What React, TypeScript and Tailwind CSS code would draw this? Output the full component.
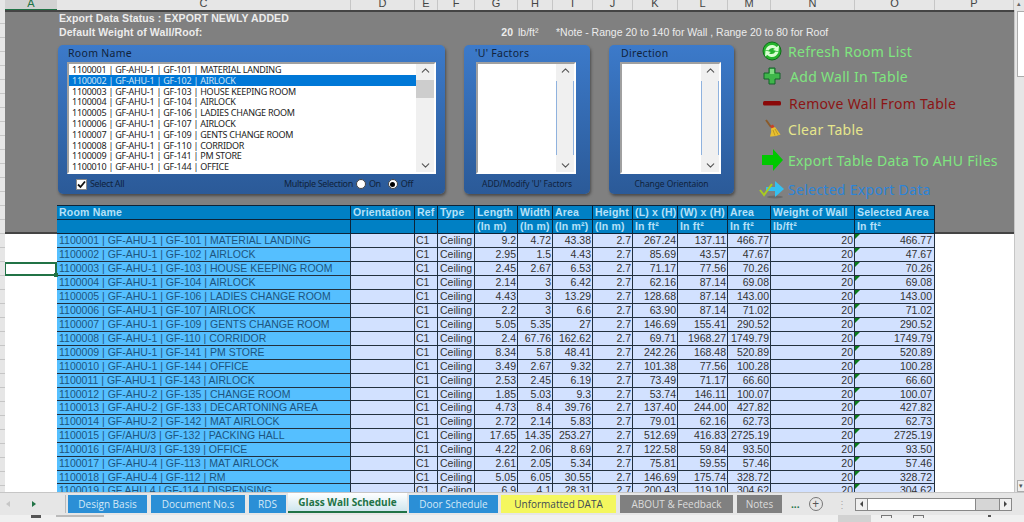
import { ChevronDown, ChevronUp } from 'lucide-react';

const columnGrid =
  'grid grid-cols-[294px_64px_23px_37px_43px_35px_40px_40px_45px_50px_43px_84px_80px]';

const sheetColumns = [
  { name: 'C', width: 'w-[294px]' },
  { name: 'D', width: 'w-[64px]' },
  { name: 'E', width: 'w-[23px]' },
  { name: 'F', width: 'w-[37px]' },
  { name: 'G', width: 'w-[43px]' },
  { name: 'H', width: 'w-[35px]' },
  { name: 'I', width: 'w-[40px]' },
  { name: 'J', width: 'w-[40px]' },
  { name: 'K', width: 'w-[45px]' },
  { name: 'L', width: 'w-[50px]' },
  { name: 'M', width: 'w-[43px]' },
  { name: 'N', width: 'w-[84px]' },
  { name: 'O', width: 'w-[80px]' },
  { name: 'P', width: 'w-[79px]' },
];

const headers = [
  ['Room Name', ''],
  ['Orientation', ''],
  ['Ref', ''],
  ['Type', ''],
  ['Length', '(In m)'],
  ['Width', '(In m)'],
  ['Area', '(In m²)'],
  ['Height', '(In m)'],
  ['(L) x (H)', 'In ft²'],
  ['(W) x (H)', 'In ft²'],
  ['Area', 'In ft²'],
  ['Weight of Wall', 'lb/ft²'],
  ['Selected Area', 'In ft²'],
];

const rows = [
  ['1100001 | GF-AHU-1 | GF-101 | MATERIAL LANDING', '9.2', '4.72', '43.38', '267.24', '137.11', '466.77'],
  ['1100002 | GF-AHU-1 | GF-102 | AIRLOCK', '2.95', '1.5', '4.43', '85.69', '43.57', '47.67'],
  ['1100003 | GF-AHU-1 | GF-103 | HOUSE KEEPING ROOM', '2.45', '2.67', '6.53', '71.17', '77.56', '70.26'],
  ['1100004 | GF-AHU-1 | GF-104 | AIRLOCK', '2.14', '3', '6.42', '62.16', '87.14', '69.08'],
  ['1100005 | GF-AHU-1 | GF-106 | LADIES CHANGE ROOM', '4.43', '3', '13.29', '128.68', '87.14', '143.00'],
  ['1100006 | GF-AHU-1 | GF-107 | AIRLOCK', '2.2', '3', '6.6', '63.90', '87.14', '71.02'],
  ['1100007 | GF-AHU-1 | GF-109 | GENTS CHANGE ROOM', '5.05', '5.35', '27', '146.69', '155.41', '290.52'],
  ['1100008 | GF-AHU-1 | GF-110 | CORRIDOR', '2.4', '67.76', '162.62', '69.71', '1968.27', '1749.79'],
  ['1100009 | GF-AHU-1 | GF-141 | PM STORE', '8.34', '5.8', '48.41', '242.26', '168.48', '520.89'],
  ['1100010 | GF-AHU-1 | GF-144 | OFFICE', '3.49', '2.67', '9.32', '101.38', '77.56', '100.28'],
  ['1100011 | GF-AHU-1 | GF-143 | AIRLOCK', '2.53', '2.45', '6.19', '73.49', '71.17', '66.60'],
  ['1100012 | GF-AHU-2 | GF-135 | CHANGE ROOM', '1.85', '5.03', '9.3', '53.74', '146.11', '100.07'],
  ['1100013 | GF-AHU-2 | GF-133 | DECARTONING AREA', '4.73', '8.4', '39.76', '137.40', '244.00', '427.82'],
  ['1100014 | GF-AHU-2 | GF-142 | MAT AIRLOCK', '2.72', '2.14', '5.83', '79.01', '62.16', '62.73'],
  ['1100015 | GF/AHU/3 | GF-132 | PACKING HALL', '17.65', '14.35', '253.27', '512.69', '416.83', '2725.19'],
  ['1100016 | GF/AHU/3 | GF-139 | OFFICE', '4.22', '2.06', '8.69', '122.58', '59.84', '93.50'],
  ['1100017 | GF-AHU-4 | GF-113 | MAT AIRLOCK', '2.61', '2.05', '5.34', '75.81', '59.55', '57.46'],
  ['1100018 | GF-AHU-4 | GF-112 | RM', '5.05', '6.05', '30.55', '146.69', '175.74', '328.72'],
  ['1100019 | GF AHU 4 | GF-114 | DISPENSING', '6.9', '4.1', '28.31', '200.43', '119.10', '304.62'],
];

const roomList = rows.slice(0, 10).map((r) => r[0]);

const tabs = [
  { label: 'Design Basis', cls: 'w-[79px] mr-[4px] bg-[#2b8fd6] text-[#d5e9f7]' },
  { label: 'Document No.s', cls: 'w-[94px] mr-[4px] bg-[#2b8fd6] text-[#d5e9f7]' },
  { label: 'RDS', cls: 'w-[37px] mr-[2px] bg-[#2b8fd6] text-[#d5e9f7]' },
  {
    label: 'Glass Wall Schedule',
    cls: 'w-[119px] mr-[2px] -mt-[2px] bg-gradient-to-b from-white to-[#cfe6ee] text-[#217346] font-bold border-b-2 border-[#217346]',
  },
  { label: 'Door Schedule', cls: 'w-[89px] mr-[3px] bg-[#2b8fd6] text-[#d5e9f7]' },
  { label: 'Unformatted DATA', cls: 'w-[115px] mr-[4px] bg-[#f4f75e] text-[#3d4a55]' },
  { label: 'ABOUT & Feedback', cls: 'w-[113px] mr-[4px] bg-[#808080] text-[#dcdcdc]' },
  { label: 'Notes', cls: 'w-[45px] bg-[#808080] text-[#dcdcdc]' },
];

function RefreshIcon() {
  return (
    <svg width="20" height="20" viewBox="0 0 20 20">
      <circle cx="10" cy="10" r="9" fill="#25b52c" stroke="#0f6e1a" />
      <path d="M3.5 9 Q5.5 3.5 11 4 Q13.5 4.3 14.5 6 L17 4.5 L16.5 10.5 L11 9 L13 7.8 Q9 5.5 6.5 9.5 z" fill="#d9ffd2" />
      <path d="M16.5 11 Q14.5 16.5 9 16 Q6.5 15.7 5.5 14 L3 15.5 L3.5 9.5 L9 11 L7 12.2 Q11 14.5 13.5 10.5 z" fill="#d9ffd2" />
    </svg>
  );
}

function AddIcon() {
  return (
    <svg width="20" height="20" viewBox="0 0 20 20">
      <path d="M7 2 h6 v5 h5 v6 h-5 v5 h-6 v-5 h-5 v-6 h5 z" fill="#3fb64a" stroke="#14632a" />
      <path d="M8 3 h4 v5 h-4 z" fill="#7ddc80" />
    </svg>
  );
}

function RemoveIcon() {
  return (
    <svg width="20" height="20" viewBox="0 0 20 20">
      <rect x="1" y="8" width="18" height="4.5" rx="1.5" fill="#8a0808" />
    </svg>
  );
}

function BroomIcon() {
  return (
    <svg width="20" height="20" viewBox="0 0 20 20">
      <path d="M2 1 L7 8" stroke="#8a5a2a" strokeWidth="2" />
      <path d="M6 7 L9 5.5 L11 9 L8 10 z" fill="#c8402a" />
      <path d="M7 9.5 L11 8 L16.5 15.5 Q11 18 6 17.5 Q8 13 7 9.5 z" fill="#e8c030" />
      <path d="M9 11 L11 16.5 M11 10 L14 15.5" stroke="#b08a18" strokeWidth="0.7" />
    </svg>
  );
}

function ArrowIcon() {
  return (
    <svg width="22" height="22" viewBox="0 0 22 22">
      <path d="M0 6 h11 v-6 l10 11 l-10 11 v-6 h-11 z" fill="#00c800" />
    </svg>
  );
}

function SelectedIcon() {
  return (
    <svg width="26" height="20" viewBox="0 0 26 20">
      <ellipse cx="16" cy="18" rx="8" ry="1.5" fill="#6a6a6a" />
      <path d="M7 8 h9 v-6 l9 8 l-9 8 v-6 h-9 z" fill="#35c0f0" />
      <path d="M1 11 L5 16 L13 5" stroke="#a8cc20" strokeWidth="2" fill="none" />
    </svg>
  );
}

const actions = [
  { label: 'Refresh Room List', color: 'text-[#7fe67f]', icon: <RefreshIcon />, iconBox: 'w-[27px] pl-[1px]', gap: '' },
  { label: 'Add Wall In Table', color: 'text-[#7fe67f]', icon: <AddIcon />, iconBox: 'w-[29px] pl-[1px]', gap: 'mt-[5px]' },
  { label: 'Remove Wall From Table', color: 'text-[#8c1414]', icon: <RemoveIcon />, iconBox: 'w-[28px] pl-[1px]', gap: 'mt-[7px]' },
  { label: 'Clear Table', color: 'text-[#e6e68c]', icon: <BroomIcon />, iconBox: 'w-[27px] pl-[3px]', gap: 'mt-[6px]' },
  { label: 'Export Table Data To AHU Files', color: 'text-[#7fe67f]', icon: <ArrowIcon />, iconBox: 'w-[27px] pl-[1px]', gap: 'mt-[11px]' },
  { label: 'Selected Export Data', color: 'text-[#2c84d8]', icon: <SelectedIcon />, iconBox: 'w-[29px] -ml-[2px]', gap: 'mt-[9px]' },
];

function ListScrollbar({ thumb }: { thumb: 'room' | 'tall' }) {
  return (
    <div className="flex w-[18px] flex-col items-center justify-between bg-[#f0f0f0] text-[#555]">
      <ChevronUp size={13} strokeWidth={2} />
      {thumb === 'room' ? (
        <div className="mb-[58px] h-[18px] w-full bg-[#cdcdcd]" />
      ) : (
        <div className="h-[74px] w-full border-x border-[#8fb2de] bg-[#f0f0f0]" />
      )}
      <ChevronDown size={13} strokeWidth={2} />
    </div>
  );
}

function GroupBox({
  title,
  width,
  titlePad,
  children,
}: {
  title: string;
  width: string;
  titlePad: string;
  children: React.ReactNode;
}) {
  return (
    <div
      className={`${width} flex h-[149px] flex-col rounded-[5px] bg-gradient-to-b from-[#3c7aca] to-[#2b5a98] shadow-[1px_2px_3px_rgba(40,40,40,0.6)]`}
    >
      <div className={`${titlePad} pt-[1px] h-[17px] text-[10.5px] leading-[14px] tracking-[0.3px] text-[#10233c] font-['Noto_Sans',sans-serif]`}>
        {title}
      </div>
      {children}
    </div>
  );
}

function RoomNameBox() {
  return (
    <GroupBox title="Room Name" width="w-[387px]" titlePad="pl-[10px]">
      <div className="mx-[9px] flex h-[112px] border-2 border-[#a0a0a0] border-r-white border-b-white bg-white">
        <div className="flex-1 overflow-hidden font-['Noto_Sans',sans-serif] text-[9px] tracking-[-0.25px] text-[#222]">
          {roomList.map((item, i) => (
            <div
              key={item}
              className={`h-[10.8px] pl-[3px] leading-[11px] whitespace-nowrap ${i === 1 ? 'bg-[#0078d7] text-[#cfe3f5]' : ''}`}
            >
              {item}
            </div>
          ))}
        </div>
        <ListScrollbar thumb="room" />
      </div>
      <div className="flex flex-1 items-center pr-[32px] pl-[18px] font-['Noto_Sans',sans-serif] text-[9px] tracking-[-0.35px] text-[#10233c]">
        <div className="flex items-center gap-[3px]">
          <div className="flex h-[11px] w-[11px] items-center justify-center border border-[#888] bg-white">
            <svg width="9" height="9" viewBox="0 0 9 9">
              <path d="M1 4.5 L3.5 7 L8 1.5" stroke="#111" strokeWidth="1.8" fill="none" />
            </svg>
          </div>
          <span>Select All</span>
        </div>
        <div className="ml-auto flex items-center">
          <span>Multiple Selection</span>
          <span className="ml-[3px] h-[10px] w-[10px] rounded-full border border-[#444] bg-white" />
          <span className="ml-[3px]">On</span>
          <span className="ml-[7px] flex h-[10px] w-[10px] items-center justify-center rounded-full border border-[#444] bg-white">
            <span className="h-[5px] w-[5px] rounded-full bg-black" />
          </span>
          <span className="ml-[3px]">Off</span>
        </div>
      </div>
    </GroupBox>
  );
}

function SmallBox({ title, footer, width, titlePad, listMargin }: { title: string; footer: string; width: string; titlePad: string; listMargin: string }) {
  return (
    <GroupBox title={title} width={width} titlePad={titlePad}>
      <div className={`${listMargin} flex h-[112px] border-2 border-[#a0a0a0] border-r-white border-b-white bg-white`}>
        <div className="flex-1" />
        <ListScrollbar thumb="tall" />
      </div>
      <div className="flex flex-1 items-center justify-center font-['Noto_Sans',sans-serif] text-[8.5px] tracking-[-0.1px] text-[#10233c]">
        {footer}
      </div>
    </GroupBox>
  );
}

function HeaderRow({ line }: { line: 0 | 1 }) {
  return (
    <div className={`${columnGrid} h-[14px] border-b border-[#0c2338]`}>
      {headers.map((h, i) => (
        <div
          key={i}
          className="overflow-hidden border-r border-[#0c2338] pl-[2px] text-[10.5px] leading-[13px] font-bold tracking-[0.2px] whitespace-nowrap text-[#b5e0f8]"
        >
          {h[line]}
        </div>
      ))}
    </div>
  );
}

function DataRow({ row, height }: { row: string[]; height: string }) {
  const [room, length, width, area, lh, wh, total] = row;
  const numbers = [length, width, area, '2.7', lh, wh, total, '20'];
  return (
    <div className={`${columnGrid} ${height} grid-rows-[minmax(0,1fr)] border-b border-[#22303e] text-[10.5px] leading-[13px] text-[#333]`}>
      <div className="overflow-hidden border-r border-[#22303e] bg-[#55bfff] pl-[2px] whitespace-nowrap text-[#1d5580]">
        {room}
      </div>
      <div className="border-r border-[#22303e] bg-[#d2e1ff]" />
      <div className="overflow-hidden border-r border-[#22303e] bg-[#d2e1ff] pl-[1px]">C1</div>
      <div className="overflow-hidden border-r border-[#22303e] bg-[#d2e1ff] pl-[2px]">Ceiling</div>
      {numbers.map((n, i) => (
        <div key={i} className="overflow-hidden border-r border-[#22303e] bg-[#d2e1ff] pr-[1px] text-right">
          {n}
        </div>
      ))}
      <div className="relative overflow-hidden border-r border-[#22303e] bg-[#d2e1ff] pr-[2px] text-right">
        <span className="absolute top-0 left-0 border-t-[5px] border-r-[5px] border-t-[#0a7a1a] border-r-transparent" />
        {total}
      </div>
    </div>
  );
}

export default function App() {
  return (
    <div className="flex h-[522px] w-[1024px] flex-col overflow-hidden bg-white font-['Liberation_Sans',Arial,sans-serif]">
      {/* Column letters */}
      <div className="flex h-[10px] overflow-hidden bg-[#e6e6e6] text-[11px] leading-[7px] text-[#444]">
        <div className="w-[5px]" />
        <div className="w-[52px] border-b border-[#217346] bg-[#d2d2d2] text-center text-[#217346]">A</div>
        {sheetColumns.map((c) => (
          <div key={c.name} className={`${c.width} border-r border-[#c6c6c6] text-center`}>
            {c.name}
          </div>
        ))}
        <div className="flex-1 text-center text-[7px] text-[#666]">▴</div>
      </div>

      <div className="flex min-h-0 flex-1">
        {/* Row header strip */}
        <div className="flex w-[5px] flex-col bg-[#e6e6e6]">
          {Array.from({ length: 35 }, (_, i) => (
            <div key={i} className="h-[14px] shrink-0 border-b border-[#c6c6c6]" />
          ))}
        </div>

        <div className="flex w-[1009px] flex-col">
          {/* Export panel */}
          <div className="flex h-[224px] shrink-0 flex-col border-t-2 border-[#444] bg-[#808080] pl-[52px] shadow-[inset_0_-2px_0_#444]">
            <div className="-mt-[1px] h-[14px] pl-[2px] text-[10.5px] leading-[14px] font-bold tracking-[0.1px] text-[#ececec]">
              Export Data Status : EXPORT NEWLY ADDED
            </div>
            <div className="flex h-[14px] pl-[2px] text-[10.5px] leading-[14px] whitespace-nowrap text-[#ececec]">
              <span className="w-[442px] shrink-0 font-bold tracking-[0.1px]">Default Weight of Wall/Roof:</span>
              <span className="w-[12px] text-right font-bold">20</span>
              <span className="ml-[5px] w-[38px]">lb/ft²</span>
              <span>*Note - Range 20 to 140 for Wall , Range 20 to 80 for Roof</span>
            </div>

            <div className="flex">
              <div className="mt-[6px] ml-[1px] flex gap-[19px]">
                <RoomNameBox />
                <SmallBox title="'U' Factors" footer="ADD/Modify 'U' Factors" width="w-[126px]" titlePad="pl-[11px]" listMargin="ml-[12px] mr-[14px]" />
                <SmallBox title="Direction" footer="Change Orientaion" width="w-[125px]" titlePad="pl-[12px]" listMargin="ml-[11px] mr-[13px]" />
              </div>
              <div className="mt-[2px] ml-[27px] flex flex-col">
                {actions.map((a) => (
                  <div key={a.label} className={`${a.gap} flex h-[20px] items-center`}>
                    <div className={`${a.iconBox} shrink-0`}>{a.icon}</div>
                    <span className={`${a.color} font-['Noto_Sans',sans-serif] text-[14px] tracking-[0.3px] whitespace-nowrap`}>
                      {a.label}
                    </span>
                  </div>
                ))}
              </div>
            </div>

            <div className="mt-auto w-[878px] border-t border-[#0c2338] bg-[#0080c4]">
              <HeaderRow line={0} />
              <HeaderRow line={1} />
            </div>
          </div>

          {/* Sheet rows */}
          <div className="min-h-0 flex-1 overflow-hidden">
            {rows.map((row, i) => (
              <div key={row[0]} className="flex">
                <div className="relative w-[52px] shrink-0">
                  {i === 2 && (
                    <div className="absolute inset-0 -left-[1px] border-2 border-[#217346]">
                      <span className="absolute -right-[3px] -bottom-[3px] h-[4px] w-[4px] bg-[#217346]" />
                    </div>
                  )}
                </div>
                <DataRow row={row} height={i === 11 || i === 17 ? 'h-[13px]' : 'h-[14px]'} />
              </div>
            ))}
          </div>
        </div>

        {/* Vertical scrollbar */}
        <div className="flex w-[10px] flex-col border-l border-[#c6c6c6] bg-[#e6e6e6]">
          <div className="mt-[1px] ml-[2px] h-[66px] border-y border-l border-[#ababab] bg-white" />
          <div className="mt-auto ml-[2px] h-[12px] border-y border-l border-[#ababab] bg-[#f0f0f0] text-center text-[7px] leading-[10px] text-[#555]">▾</div>
        </div>
      </div>

      {/* Sheet tabs */}
      <div className="flex h-[23px] items-stretch border-t border-[#c6c6c6] bg-[#e6e6e6] pt-[2px] pb-[2px] font-['Open_Sans',sans-serif] text-[10px]">
        <div className="flex w-[65px] shrink-0 items-center gap-[18px] pl-[6px]">
          <span className="border-y-[3px] border-r-[4px] border-y-transparent border-r-[#c6c6c6]" />
          <span className="ml-[4px] border-y-[3px] border-l-[4px] border-y-transparent border-l-[#217346]" />
        </div>
        <div className="flex border-l border-[#bbb] pl-[2px]">
          {tabs.map((t) => (
            <div key={t.label} className={`${t.cls} flex items-center justify-center whitespace-nowrap`}>
              {t.label}
            </div>
          ))}
        </div>
        <span className="ml-[9px] self-center font-bold text-[#217346]">...</span>
        <span className="ml-[9px] flex h-[14px] w-[14px] items-center justify-center self-center rounded-full border border-[#777] text-[12px] leading-none text-[#555]">
          +
        </span>
        <span className="ml-[14px] self-center text-[#aaa]">⋮</span>
        <div className="mr-[12px] ml-auto flex h-[13px] w-[157px] items-center self-center border border-[#888] bg-[#d6d6d6]">
          <span className="flex h-full w-[12px] items-center justify-center border-r border-[#888] bg-[#f0f0f0]">
            <span className="border-y-[3px] border-r-[3px] border-y-transparent border-r-[#444]" />
          </span>
          <span className="h-full w-[108px] border-r border-[#888] bg-white" />
          <span className="ml-auto flex h-full w-[12px] items-center justify-center border-l border-[#888] bg-[#f0f0f0]">
            <span className="border-y-[3px] border-l-[3px] border-y-transparent border-l-[#444]" />
          </span>
        </div>
      </div>

      {/* Status bar, cut off by the screenshot */}
      <div className="flex h-[7px] overflow-hidden bg-[#f0f0f0] text-[#666]">
        <span className="ml-[31px] h-[3px] w-[10px] bg-[#555]" />
        <span className="ml-[15px] h-[2px] w-[48px] bg-[#bbb]" />
        <span className="ml-[734px] h-full w-[33px] bg-[#d2d2d2]" />
        <span className="ml-[10px] h-[3px] w-[11px] border-x border-t border-[#777]" />
        <span className="ml-[21px] h-[3px] w-[11px] border-x border-t border-[#777]" />
        <span className="ml-[64px] h-[2px] w-[3px] bg-[#555]" />
      </div>
    </div>
  );
}
